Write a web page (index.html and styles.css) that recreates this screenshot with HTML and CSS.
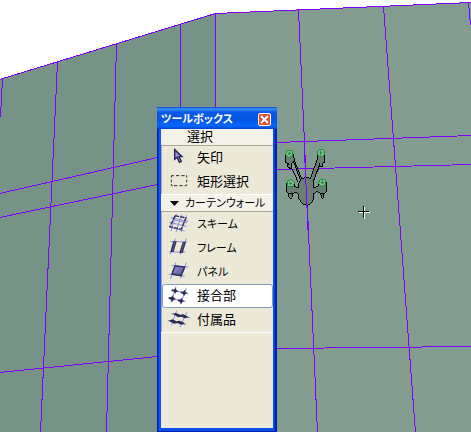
FILE: index.html
```html
<!DOCTYPE html>
<html lang="ja">
<head>
<meta charset="utf-8">
<title>ツールボックス</title>
<link rel="stylesheet" href="styles.css">
</head>
<body>
<main class="canvas">
  <svg class="drawing" viewBox="0 0 471 432" preserveAspectRatio="xMinYMin slice" aria-hidden="true">
    <path class="wall-left" d="M0 79L215 13L217 432H0z"/>
    <path class="wall-right" d="M215 13L471 2V432H217z"/>
    <g class="mullions" transform="translate(.5 .5)">
      <path d="M-1 79L215 13L471 2"/>
      <path d="M2 78L0 117M57 61L40 432M116 43L106 432M180 24V432M215 13L217 432M298 9L317 432M383 6L415 432M468 2L470 25"/>
      <path d="M-1 193L157 157M-1 217L157 184M-1 372L157 356M276 142L471 135M276 169L471 164M276 348L471 346"/>
    </g>
    <g transform="translate(275 130) scale(.33333)">
      <path class="fitting" d="M31 70V96L38 100V112H44V116H49V101L56 95L76 150L72 158V174L59 170L59 160H34V182L40 190V198L46 207L52 202V192L60 187L70 191L72 207L82 221L97 227L109 219L115 207V192L126 184L136 190L142 206L147 200V192L155 184V158L144 149L131 157L129 168L116 174V150L133 110H143V100L149 96V70L138 59L127 70L126 90L106 146L94 141L80 147L58 91L55 71L43 60z"/>
      <path class="fitting-line" d="M49 112L69 155M131 110L115 156M38 98L42 104M135 98L131 110M40 190L50 192M137 190L147 192"/>
      <g class="bolts"><circle cx="43" cy="71" r="11"/><circle cx="138" cy="69" r="11"/><circle cx="47" cy="160" r="11"/><circle cx="142" cy="158" r="11"/><path d="M39 71H47M43 66V76M134 69H142M138 64V74M43 160H51M47 155V165M138 158H146M142 153V163"/></g>
      <path class="seam" d="M87 30L99 300"/>
    </g>
    <path class="cursor-shade" d="M359 212.500H370M364.500 207V219"/>
    <path class="cursor" d="M358 211.500H369M363.500 206V218"/>
  </svg>

  <section class="toolbox" aria-label="ツールボックス">
    <header class="titlebar">
      <h1>ツールボックス</h1>
      <button class="close" type="button" aria-label="閉じる"><svg viewBox="0 0 11 11"><path d="M2 2L9 9M9 2L2 9"/></svg></button>
    </header>
    <div class="panel">
      <div class="section">
        <h2 class="section-head"><span class="marker"></span><span class="kanji">選択</span></h2>
        <div class="tools">
          <button class="tool" type="button"><svg class="icon" viewBox="0 0 66 72"><path fill="#9292dc" stroke="#252550" stroke-width="4" d="M20 11V40L27 34L34 49L40 46L33 32H42z"/></svg>矢印</button>
          <button class="tool" type="button"><svg class="icon" viewBox="0 0 66 72"><path class="marquee" d="M10 23V17H18M24 17H34M40 17H50M54 17H56V23M56 29V37M56 43V47H50M44 47H34M28 47H18M14 47H10V42M10 37V29"/></svg>矩形選択</button>
        </div>
      </div>
      <div class="section">
        <h2 class="section-head"><span class="marker"><svg class="disclosure" viewBox="0 0 9 5"><path d="M0 0H9L4.500 5z"/></svg></span>カーテンウォール</h2>
        <div class="tools">
          <button class="tool kana" type="button"><svg class="icon" viewBox="0 0 66 72"><path class="pale" d="M8 17L60 28M4 31L56 43M3 45L50 57M25 5L9 57M41 8L24 60M56 10L39 61M14 23L57 32"/><path class="dark" d="M21 11L54 18L39 52L6 44z" stroke-dasharray="13 3"/></svg>スキーム</button>
          <button class="tool kana" type="button"><svg class="icon" viewBox="0 0 66 72"><path class="pale" d="M6 17H58M3 48H52M22 8L7 54M55 7L37 56"/><path class="bar" d="M16 16H26L17 48H7zM44 18H54L44 51H34z"/><path stroke="#7777b4" stroke-width="2" d="M21 18L13 46M48 21L40 48"/></svg>フレーム</button>
          <button class="tool kana" type="button"><svg class="icon" viewBox="0 0 66 72"><defs><linearGradient id="glass" x2="1" y2="1"><stop stop-color="#9a9ade"/><stop offset="1" stop-color="#50508c"/></linearGradient></defs><path class="pale" d="M11 16L60 21M3 43L50 49M23 8L8 56M55 8L38 55"/><path fill="url(#glass)" stroke="#292955" stroke-width="4" d="M21 18L50 21L39 47L12 42z"/></svg>パネル</button>
          <button class="tool selected" type="button" aria-pressed="true"><svg class="icon" viewBox="0 0 66 72"><path class="pale" d="M9 18L61 29M1 42L53 52M24 7L9 56M55 13L37 61"/><path class="bar" d="M12 16L18 17L24 11L25 18L32 22L25 24L21 30L18 23L11 21zM39 22L45 23L51 17L52 24L59 28L52 30L48 37L45 30L38 27zM3 39L9 40L15 34L17 41L24 45L17 48L12 54L9 47L2 44zM30 46L36 47L42 41L43 48L50 52L43 54L39 61L36 54L29 51z"/></svg>接合部</button>
          <button class="tool" type="button"><svg class="icon" viewBox="0 0 66 72"><path class="pale" d="M9 17L66 29M0 38L54 50M26 8L10 52M56 13L36 58"/><path class="bar" d="M14 17L25 15L35 20L46 19L63 28L50 31L40 26L30 28zM2 38L14 34L25 40L35 38L52 46L40 50L29 45L18 47z"/></svg>付属品</button>
        </div>
      </div>
    </div>
  </section>
</main>
</body>
</html>
```
FILE: styles.css
```css
* { box-sizing: border-box; }
body { margin: 0; font: 13px/16px "Liberation Sans", "Noto Sans CJK JP", sans-serif; font-feature-settings: "palt"; color: #000; }
.canvas { position: relative; height: 100vh; overflow: hidden; background: #fff; }
.drawing { display: block; width: 100%; height: 100%; shape-rendering: crispEdges; fill: none; }
.wall-left { fill: #779286; }
.wall-right { fill: #829c8f; }
.mullions, .seam { stroke: #8000ff; }
.seam { stroke-width: 3; }
.fitting { fill: #697e75; stroke: #000; stroke-width: 3; }
.fitting-line { stroke: #000; stroke-width: 3; }
.bolts { fill: #8fa99b; stroke: #00a020; stroke-width: 3; }
.cursor { stroke: #000; }
.cursor-shade { stroke: #fff; }

.toolbox { position: absolute; top: 107px; bottom: 0; left: 157px; width: 120px; display: flex; flex-direction: column; padding: 0 4px 3px; background: linear-gradient(90deg, #001bb5 0 1px, #0742dc 1px 2px, #1057f2 2px 4px, #0a50ef 4px 116px, #0648e8 116px 118px, #0021aa 118px); border-bottom: 1px solid #0020a8; }
.titlebar { display: flex; align-items: center; justify-content: space-between; height: 22px; margin: 0 -4px; padding: 2px 6px 0 4px; background: linear-gradient(#0848c8, #3a94fc 2px, #0a5ae4 5px, #0655e5 13px, #0768fb 19px, #0042c8); }
h1, h2 { margin: 0; font-weight: normal; }
h1 { font-size: 11px; font-weight: bold; color: #fff; white-space: nowrap; }
.close { width: 13px; height: 13px; padding: 0; border: 1px solid #fff; border-radius: 2px; background: #dc5030; }
.close svg { display: block; width: 100%; height: 100%; fill: none; stroke: #fff; stroke-width: 2; }
.panel { flex: 1; background: #ece9d8; }
.section { border-bottom: 1px solid #fff; }
.section:first-child { border-bottom: 0; }
.section + .section { border-top: 1px solid #fff; }
.section-head { display: flex; align-items: center; gap: 6px; height: 16px; padding-left: 9px; border-radius: 5px; background: #f4f2e8; font-size: 11px; white-space: nowrap; }
.marker { display: flex; width: 9px; }
.disclosure { width: 9px; height: 5px; }
.kanji { padding-left: 2px; font-size: 13px; }
.tools { border-top: 1px solid #aca899; border-left: 1px solid #aca899; }
.tool { display: flex; align-items: center; gap: 7px; width: 100%; height: 24px; padding: 0 0 0 5px; border: 1px solid transparent; border-radius: 3px; background: none; font: inherit; font-feature-settings: inherit; color: inherit; white-space: nowrap; }
.kana { font-size: 11px; }
.selected { border-color: #7f9db9; background: #fff; }
.icon { flex: none; width: 22px; height: 24px; fill: none; }
.marquee { stroke: #303038; stroke-width: 3; }
.pale { stroke: #8f8fda; stroke-width: 3; }
.dark { stroke: #2b2b58; stroke-width: 4; }
.bar { fill: #2b2b58; }
```
